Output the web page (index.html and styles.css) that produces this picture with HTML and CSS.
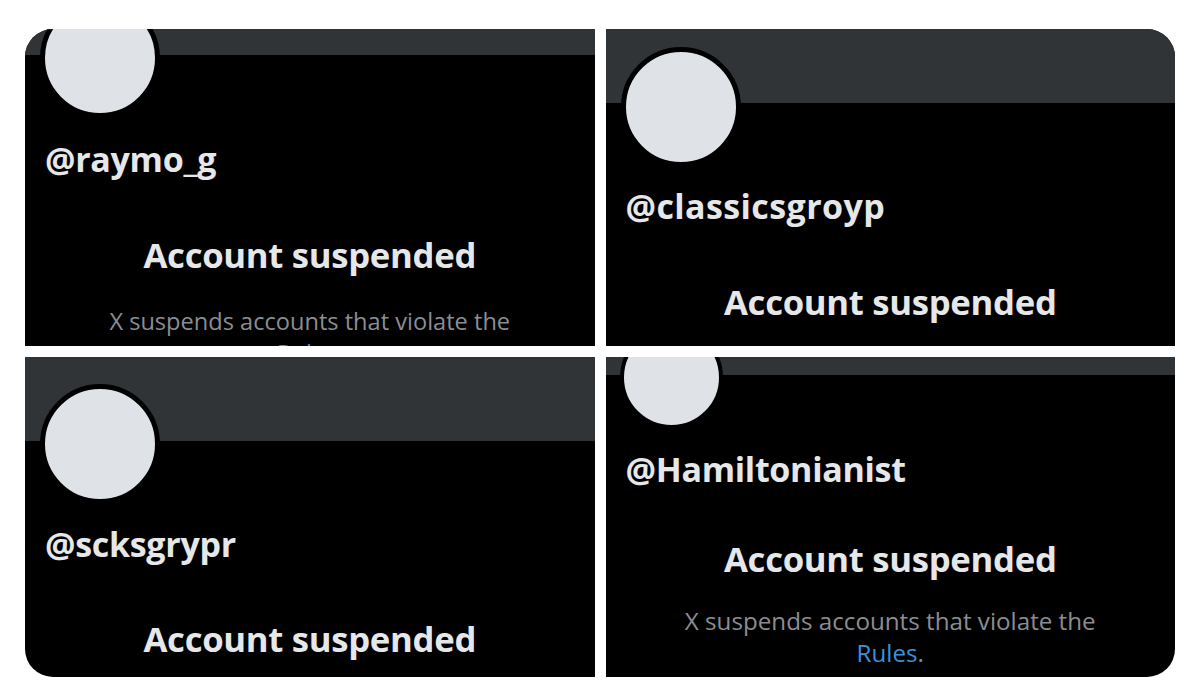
FILE: index.html
```html
<!DOCTYPE html>
<html lang="en">
<head>
  <meta charset="UTF-8">
  <meta name="viewport" content="width=device-width, initial-scale=1.0">
  <title>Account suspended</title>
  <link rel="stylesheet" href="styles.css">
</head>
<body>
  <div class="collage">
    <!-- top left -->
    <div class="card card--one">
      <div class="banner"></div>
      <div class="avatar"></div>
      <div class="handle">@raymo_g</div>
      <div class="notice">
        <h1>Account suspended</h1>
        <p>X suspends accounts that violate the <a href="#">Rules</a>.</p>
      </div>
    </div>

    <!-- top right -->
    <div class="card card--two">
      <div class="banner"></div>
      <div class="avatar"></div>
      <div class="handle">@classicsgroyp</div>
      <div class="notice">
        <h1>Account suspended</h1>
      </div>
    </div>

    <!-- bottom left -->
    <div class="card card--three">
      <div class="banner"></div>
      <div class="avatar"></div>
      <div class="handle">@scksgrypr</div>
      <div class="notice">
        <h1>Account suspended</h1>
      </div>
    </div>

    <!-- bottom right -->
    <div class="card card--four">
      <div class="banner"></div>
      <div class="avatar"></div>
      <div class="handle">@Hamiltonianist</div>
      <div class="notice">
        <h1>Account suspended</h1>
        <p>X suspends accounts that violate the <a href="#">Rules</a>.</p>
      </div>
    </div>
  </div>
</body>
</html>
```

FILE: styles.css
```css
*, *::before, *::after {
  margin: 0;
  padding: 0;
  box-sizing: border-box;
}

body {
  font-family: "Open Sans", "Noto Sans", sans-serif;
  background-color: #fff;
  color: #e6e7e8;
  padding: 29px 25px 0;
}

.collage {
  width: 1150px;
  display: grid;
  grid-template-columns: 1fr 1fr;
  grid-template-rows: 317px 320px;
  gap: 11px;
  border-radius: 28px;
  overflow: hidden;
}

.card {
  background-color: #000;
  overflow: hidden;
  display: flex;
  flex-direction: column;
}

.banner {
  flex-shrink: 0;
  background-color: #313437;
}

.avatar {
  flex-shrink: 0;
  width: 120px;
  height: 120px;
  margin-left: 15px;
  border: 5px solid #000;
  border-radius: 50%;
  background-color: #dfe3e8;
  position: relative;
}

.handle {
  margin: 20px 0 0 20px;
  font-size: 34px;
  line-height: 40px;
  font-weight: 700;
  letter-spacing: -0.3px;
}

.notice {
  text-align: center;
}

.notice h1 {
  margin-top: 56px;
  font-size: 34.7px;
  line-height: 40px;
  font-weight: 700;
  letter-spacing: -0.3px;
}

.notice p {
  max-width: 440px;
  margin: 26px auto 0;
  font-size: 23.6px;
  line-height: 32px;
  color: #8a8e93;
}

.notice a {
  color: #3b92dc;
  text-decoration: none;
}

/* each screenshot was cropped at a different scroll point */
.card--one .banner { height: 26px; }
.card--one .avatar { margin-top: -57px; }
.card--one .handle { margin-top: 21px; }
.card--one .notice p { margin-top: 30px; }

.card--two .banner { height: 74px; }
.card--two .avatar { margin-top: -56px; }
.card--two .handle { margin-top: 19px; letter-spacing: 0.4px; }

.card--three .banner { height: 84px; }
.card--three .avatar { margin-top: -57px; }
.card--three .notice h1 { margin-top: 55px; }

.card--four .banner { height: 18px; }
.card--four .avatar {
  width: 103px;
  height: 103px;
  margin: -49px 0 0 14px;
  border-width: 4px;
}
.card--four .notice h1 { margin-top: 50px; }
.card--four .notice p {
  max-width: 450px;
  font-size: 24.2px;
}
```
